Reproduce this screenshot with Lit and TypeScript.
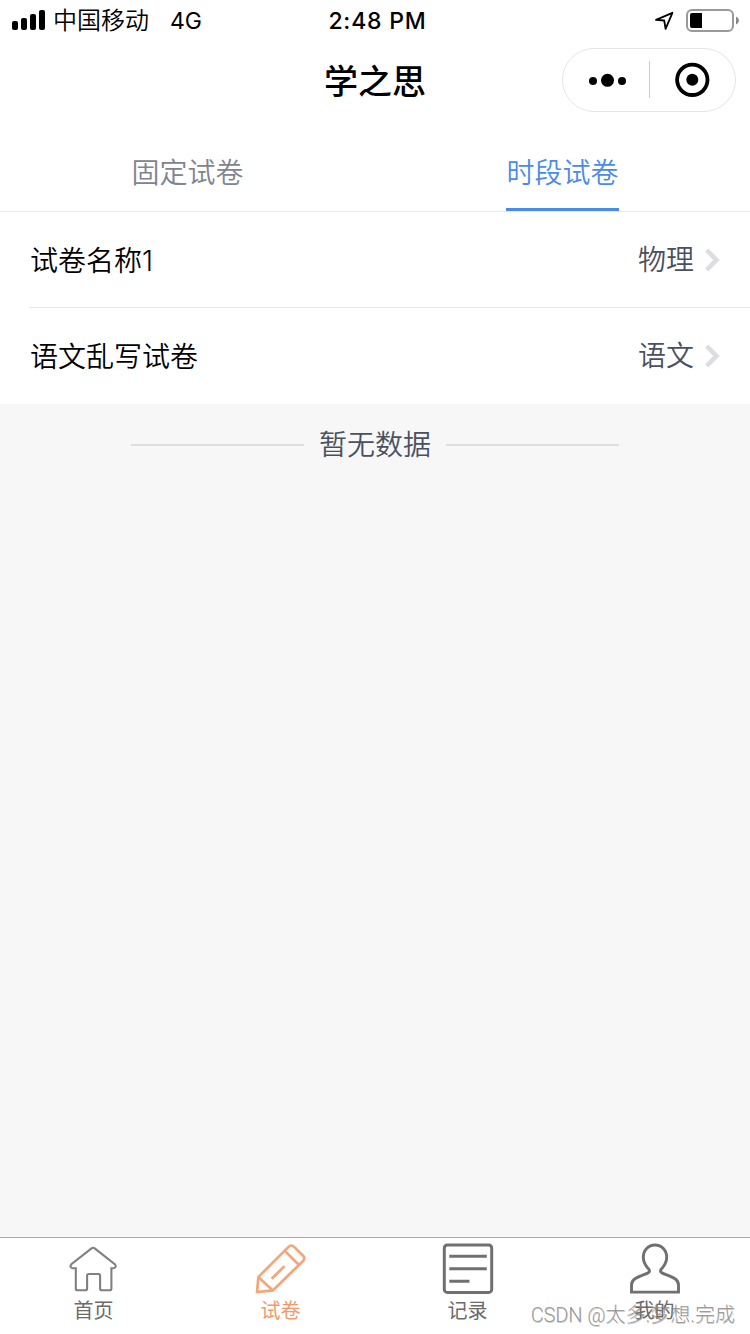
import { LitElement, html, css, svg } from "lit";
import { customElement, state } from "lit/decorators.js";

const homeIcon = svg`<path d="M17 50.5H12.5Q10.7 50.5 10.7 48.7V28.5H7.5Q4 27.5 6.3 24.4L26.4 8.6Q28 7.3 29.6 8.6L49.7 24.4Q52 27.5 48.5 28.5H46.3V48.7Q46.3 50.5 44.5 50.5H36.6Q35 50.5 35 48.7V35.8Q35 34.2 33.4 34.2H23.6Q22 34.2 22 35.8V48.7Q22 50.5 20.2 50.5Z" stroke-width="2.1" transform="translate(-0.9 0.3)"/>`;
const pencilIcon = svg`<path d="M6 38.2L36.2 8Q39 5.2 41.8 8L50.6 16.6Q53.4 19.4 50.6 22.2L20.6 51.5L4.8 53.2Z M6 38.2L20.6 51.5 M32.5 12L46.5 25.8 M19.4 39.8L32.3 27.2" stroke-width="2.7" transform="translate(-0.7 -0.6)"/>`;
const listIcon = svg`<rect x="4.3" y="5.5" width="47.4" height="47.4" rx="3" stroke-width="3"/><path d="M9.3 16.7H46.8M9.3 29.3H46.8M9.3 41.7H29.5" stroke-width="3"/>`;
const userIcon = svg`<path d="M4.5 52.6V45.5C4.5 39.5 10.5 37.8 17 35.2C21.5 33.3 23.5 32.4 22 30C18.5 26.2 16.3 23 16.3 18C16.3 10.8 21.3 5.5 28 5.5S39.7 10.8 39.7 18C39.7 23 37.5 26.2 34 30C32.5 32.4 34.5 33.3 39 35.2C45.5 37.8 51.5 39.5 51.5 45.5V52.6Z" stroke-width="2.9"/>`;

@customElement("app-root")
export class AppRoot extends LitElement {
  @state() private tab = 1;

  private tabs = ["固定试卷", "时段试卷"];
  private papers = [
    { name: "试卷名称1", subject: "物理" },
    { name: "语文乱写试卷", subject: "语文" },
  ];
  private nav = [
    { label: "首页", icon: homeIcon, cls: "home" },
    { label: "试卷", icon: pencilIcon, cls: "on" },
    { label: "记录", icon: listIcon, cls: "" },
    { label: "我的", icon: userIcon, cls: "" },
  ];

  static styles = css`
    :host {
      display: flex;
      flex-direction: column;
      position: relative;
      height: 1334px;
      overflow: hidden;
      background: #f7f7f7;
      color: #000;
      font-family: Inter, "Noto Sans CJK SC", sans-serif;
      font-size: 28px;
    }
    * { box-sizing: border-box; }
    svg { display: block; flex: none; fill: none; }
    .status {
      display: grid;
      grid-template-columns: 1fr auto 1fr;
      align-items: center;
      height: 40px;
      padding: 0 11px 0 12px;
      background: #fff;
      font-size: 24px;
      line-height: 38px;
    }
    .carrier { display: flex; align-items: center; }
    .carrier .name { margin-left: 7px; padding-top: 2px; font-weight: 350; }
    .carrier .net { margin-left: 21px; padding-top: 2px; font-size: 23px; }
    .time { font-weight: 500; font-size: 23px; letter-spacing: 0.8px; padding: 2px 0 0 4px; }
    .power { display: flex; justify-content: flex-end; }
    .bar {
      display: grid;
      grid-template-columns: 1fr auto 1fr;
      align-items: center;
      height: 80px;
      padding: 0 14px;
      background: #fff;
    }
    .title { grid-column: 2; padding-top: 3px; font-size: 34px; line-height: 77px; font-weight: 500; }
    .capsule {
      justify-self: end;
      display: flex;
      align-items: center;
      width: 174px;
      height: 64px;
      border: 1px solid #e6e6e6;
      border-radius: 32px;
    }
    .tabs {
      display: flex;
      height: 92px;
      padding-top: 12px;
      background: #fff;
      border-bottom: 1px solid #e9eaec;
    }
    .tab { flex: 1; display: flex; justify-content: center; color: #80848f; line-height: 82px; }
    .tab span { height: 79px; border-bottom: 3px solid transparent; }
    .tab.active { color: #4a8bea; }
    .tab.active span { border-color: #4a8bea; }
    .cells { background: #fff; }
    .cell {
      display: flex;
      align-items: center;
      height: 96px;
      margin-left: 30px;
      padding-right: 29px;
      border-bottom: 1px solid #e6e7e9;
    }
    .cell:last-child { border-color: transparent; }
    .cell .name { flex: 1; padding-bottom: 2px; }
    .cell .subject { color: #495060; margin-right: 10px; padding-bottom: 3px; }
    .tab, .cell, .empty { font-weight: 350; }
    .empty {
      display: flex;
      align-items: center;
      gap: 15px;
      width: 488px;
      height: 80px;
      margin: 0 auto;
      color: #495060;
    }
    .empty span { padding-bottom: 3px; }
    .empty i { flex: 1; height: 2px; margin-top: 2px; background: #dddee1; }
    .fill { flex: 1; }
    .nav {
      display: flex;
      height: 97px;
      padding-right: 2px;
      background: #fff;
      border-top: 1px solid #a8a8a8;
    }
    .item {
      flex: 1;
      display: flex;
      flex-direction: column;
      align-items: center;
      color: #6b6b6b;
      font-size: 20px;
      line-height: 28px;
    }
    .item svg { stroke: #707070; }
    .item.home svg { stroke: #808080; }
    .item.on { color: #f09a6c; }
    .item.on svg { stroke: #f4a57a; }
    .mark {
      position: absolute;
      right: 15px;
      bottom: 4px;
      font-family: Roboto, "Noto Sans CJK SC", sans-serif;
      font-size: 20px;
      font-weight: 300;
      line-height: 30px;
      white-space: nowrap;
      color: rgba(140, 140, 140, 0.85);
      text-shadow: 0.5px 0.5px 0.5px rgba(0, 0, 0, 0.2);
    }
    .mark span { letter-spacing: -0.1px; }
  `;

  render() {
    return html`
      <div class="status">
        <div class="carrier">
          <svg width="34" height="40" viewBox="0 0 34 40">
            <g fill="#000"><rect x="0" y="21" width="6" height="9" rx="2" /><rect x="9" y="18" width="6" height="12" rx="2" /><rect x="18" y="14" width="6" height="16" rx="2" /><rect x="27" y="10" width="6" height="20" rx="2" /></g>
          </svg>
          <span class="name">中国移动</span><span class="net">4G</span>
        </div>
        <div class="time">2:48 PM</div>
        <div class="power">
          <svg width="89" height="40" viewBox="650 0 89 40">
            <path d="M656 19.8L672.4 12.8L665.6 28.8L664.2 20.5Z" stroke="#000" stroke-width="1.8" stroke-linejoin="round" />
            <rect x="687" y="10" width="46" height="21" rx="5" stroke="#999" stroke-width="2" />
            <path d="M692 13H702V28H692Q690 28 690 26V15Q690 13 692 13Z" fill="#000" />
            <path d="M736 16.5Q739 18 739 20.5T736 24.5Z" fill="#888" />
          </svg>
        </div>
      </div>
      <div class="bar">
        <div class="title">学之思</div>
        <div class="capsule">
          <svg width="172" height="62" viewBox="563 49 172 62">
            <g fill="#000"><circle cx="593" cy="81" r="4" /><circle cx="607.5" cy="80.3" r="6.5" /><circle cx="622" cy="81" r="4" /><circle cx="692.3" cy="79.8" r="6" /></g>
            <path d="M649.5 61V98" stroke="#ccc" />
            <circle cx="692.3" cy="79.8" r="15.2" stroke="#000" stroke-width="3.8" />
          </svg>
        </div>
      </div>
      <div class="tabs">
        ${this.tabs.map((t, i) => html`<div class="tab ${i === this.tab ? "active" : ""}" @click=${() => (this.tab = i)}><span>${t}</span></div>`)}
      </div>
      <div class="cells">
        ${this.papers.map((p) => html`
          <div class="cell">
            <span class="name">${p.name}</span><span class="subject">${p.subject}</span>
            <svg width="17" height="24" viewBox="0 0 17 24"><path d="M2.7 2.2L12.5 12L2.7 21.8" stroke="#dddee1" stroke-width="4.6" /></svg>
          </div>`)}
      </div>
      <div class="empty"><i></i><span>暂无数据</span><i></i></div>
      <div class="fill"></div>
      <div class="nav">
        ${this.nav.map((n) => html`
          <div class="item ${n.cls}">
            <svg width="56" height="59" viewBox="0 -1.5 56 59">${n.icon}</svg>
            <span>${n.label}</span>
          </div>`)}
      </div>
      <div class="mark"><span>CSDN @</span>太多.梦想.完成</div>
    `;
  }
}
